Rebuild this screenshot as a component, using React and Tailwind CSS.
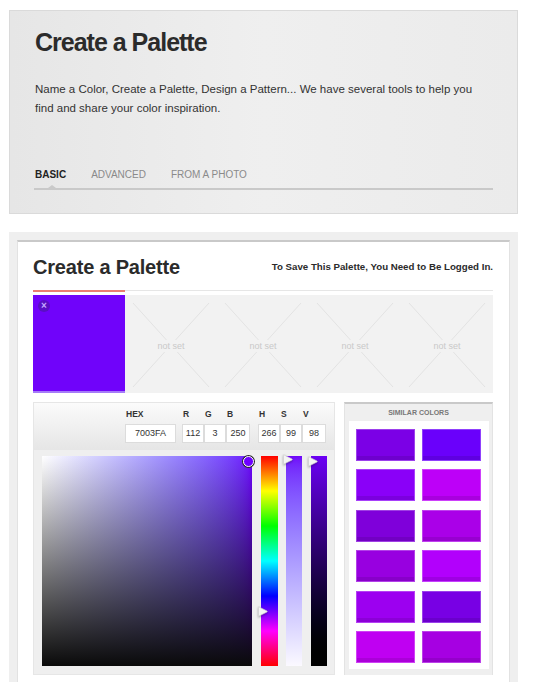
import React from "react";

const similar = [
  ["#7b00e6", "#6a00fb"],
  ["#8a00f8", "#bd00f8"],
  ["#7f00da", "#aa00e8"],
  ["#9800e0", "#b200fc"],
  ["#9c00f0", "#7800e4"],
  ["#bf00f2", "#a600e2"],
];

function Placeholder() {
  return (
    <div className="relative w-[92px] h-[98px] flex items-center justify-center">
      <svg className="absolute inset-0" width="92" height="98" viewBox="0 0 92 98">
        <line x1="8" y1="8" x2="84" y2="92" stroke="#e3e3e3" strokeWidth="1" />
        <line x1="84" y1="8" x2="8" y2="92" stroke="#e3e3e3" strokeWidth="1" />
      </svg>
      <span className="relative mt-[3px] bg-[#f2f2f2] px-[3px] text-[9px] leading-[12px] text-[#c9c9c9]">not set</span>
    </div>
  );
}

function Field({ label, value, w }) {
  return (
    <div className="flex flex-col">
      <div className="h-[12px] pl-[1px] text-[8.5px] leading-[12px] font-bold text-[#333]">{label}</div>
      <div
        className="mt-[4px] h-[19px] bg-white border border-[#dcdcdc] text-center text-[9px] leading-[17px] text-[#333]"
        style={{ width: w }}
      >
        {value}
      </div>
    </div>
  );
}

function Marker() {
  return (
    <svg width="11" height="11" viewBox="0 0 11 11" className="drop-shadow-[0_1px_1px_rgba(0,0,0,0.35)]">
      <path d="M1.5 1.2 Q1 0.6 2 0.9 L10 5 Q10.6 5.5 10 6 L2 10.1 Q1 10.4 1.5 9.8 Z" fill="#f4f4f4" stroke="#d0d0d0" strokeWidth="0.6" />
    </svg>
  );
}

export default function App() {
  return (
    <div className="w-[535px] h-[682px] overflow-hidden bg-white font-['Liberation_Sans',Arial,sans-serif] text-[#333]">
      {/* Top card */}
      <div className="mt-[10px] ml-[9px] w-[509px] h-[204px] border border-[#dadada] bg-linear-to-r from-[#e6e6e6] via-[#efefef] to-[#ebebeb] pl-[25px] pr-[24px] pt-[19px]">
        <h1 className="text-[25px] leading-[25px] font-bold tracking-[-1px] text-[#2b2b2b]">Create a Palette</h1>
        <p className="mt-[25px] text-[11.5px] leading-[19px] text-[#333]">
          Name a Color, Create a Palette, Design a Pattern... We have several tools to help you find and share your color inspiration.
        </p>
        <div className="mt-[51px] flex gap-[25px] text-[10px] leading-[12px] uppercase">
          <span className="font-bold text-[#222]">Basic</span>
          <span className="text-[#8a8a8a]">Advanced</span>
          <span className="text-[#8a8a8a]">From a Photo</span>
        </div>
        <div className="relative mt-[7px] -ml-px w-[459px] h-[2px] bg-[#c9c9c9]">
          <div className="absolute left-[14px] -top-[3px] w-0 h-0 border-l-[4px] border-r-[4px] border-b-[3px] border-l-transparent border-r-transparent border-b-[#c9c9c9]" />
        </div>
      </div>

      {/* Bottom section */}
      <div className="mt-[18px] ml-[9px] w-[509px] h-[450px] bg-[#efefef] pt-[8px] pl-[8px]">
        <div className="w-[493px] h-full bg-white border-t-2 border-t-[#c9c9c9] border-x border-x-[#e2e2e2] pl-[15px] pr-[16px]">
          <div className="h-[48px] pt-[13px] flex justify-between items-start">
            <h2 className="text-[20px] leading-[24px] font-bold tracking-[-0.2px] text-[#2b2b2b]">Create a Palette</h2>
            <span className="text-[9.7px] leading-[24px] font-bold text-[#2b2b2b]">To Save This Palette, You Need to Be Logged In.</span>
          </div>
          <div className="flex items-start">
            <div className="w-[92px] h-[2px] bg-[#ea7d72]" />
            <div className="flex-1 h-px bg-[#e6e6e6]" />
          </div>
          <div className="mt-[3px] flex h-[98px]">
            <div className="relative w-[92px] h-[98px] bg-[#7003fa] border-b-2 border-b-[#a57cf8]">
              <div className="absolute left-[5px] top-[5px] w-[12px] h-[12px] rounded-full bg-[#5a0fc4] flex items-center justify-center text-[10px] leading-none font-bold text-[#c4a6ff]">×</div>
            </div>
            <div className="flex bg-[#f2f2f2]">
              <Placeholder />
              <Placeholder />
              <Placeholder />
              <Placeholder />
            </div>
          </div>

          <div className="mt-[9px] flex">
            {/* Picker */}
            <div className="w-[302px]">
              <div className="h-[48px] border border-[#e6e6e6] bg-linear-to-b from-[#fbfbfb] to-[#e6e6e6] pl-[91px] pt-[5px] flex">
                <Field label="HEX" value="7003FA" w={51} />
                <div className="ml-[6px] flex">
                  <Field label="R" value="112" w={22} />
                  <Field label="G" value="3" w={22} />
                  <Field label="B" value="250" w={24} />
                </div>
                <div className="ml-[8px] flex">
                  <Field label="H" value="266" w={22} />
                  <Field label="S" value="99" w={22} />
                  <Field label="V" value="98" w={24} />
                </div>
              </div>
              <div className="h-[225px] bg-[#efefef] border-x border-b border-[#e6e6e6] pl-[8px] pt-[6px] flex">
                <div className="relative w-[210px] h-[210px] bg-linear-to-r from-white to-[#6e00ff]">
                  <div className="absolute inset-0 bg-linear-to-b from-transparent to-[#0a0a0a]" />
                  <div className="absolute right-[-2px] top-[0px] w-[11px] h-[11px] rounded-full border-[1.5px] border-white shadow-[0_0_0_1px_#2a2a2a] bg-[#6e00ff]" />
                </div>
                <div className="relative ml-[9px] w-[17px] h-[210px] bg-[linear-gradient(to_bottom,#ff0000,#ffff00,#00ff00,#00ffff,#0000ff,#ff00ff,#ff0000)]">
                  <div className="absolute -left-[4px] top-[150px]"><Marker /></div>
                </div>
                <div className="relative ml-[8px] w-[16px] h-[210px] bg-linear-to-b from-[#7003fa] to-[#fbf9ff]">
                  <div className="absolute -left-[4px] top-[-2px]"><Marker /></div>
                </div>
                <div className="relative ml-[9px] w-[16px] h-[210px] bg-linear-to-b from-[#6c00f5] to-black">
                  <div className="absolute -left-[4px] top-[0px]"><Marker /></div>
                </div>
              </div>
            </div>

            {/* Similar colors */}
            <div className="ml-[9px] w-[149px] h-[273px] bg-[#efefef] border-t-2 border-t-[#c9c9c9] border-x border-x-[#e3e3e3]">
              <div className="h-[17px] text-center text-[7px] leading-[17px] font-bold uppercase text-[#777]">Similar Colors</div>
              <div className="ml-[4px] w-[140px] h-[248px] bg-white pt-[8px] pl-[7px] grid grid-cols-[59px_59px] gap-x-[7px] gap-y-[8.4px] content-start">
                {similar.flat().map((c, i) => (
                  <div
                    key={i}
                    className="h-[32px] border border-white/25 shadow-[inset_0_-4px_0_rgba(0,0,0,0.1)]"
                    style={{ backgroundColor: c }}
                  />
                ))}
              </div>
            </div>
          </div>
        </div>
      </div>
    </div>
  );
}
